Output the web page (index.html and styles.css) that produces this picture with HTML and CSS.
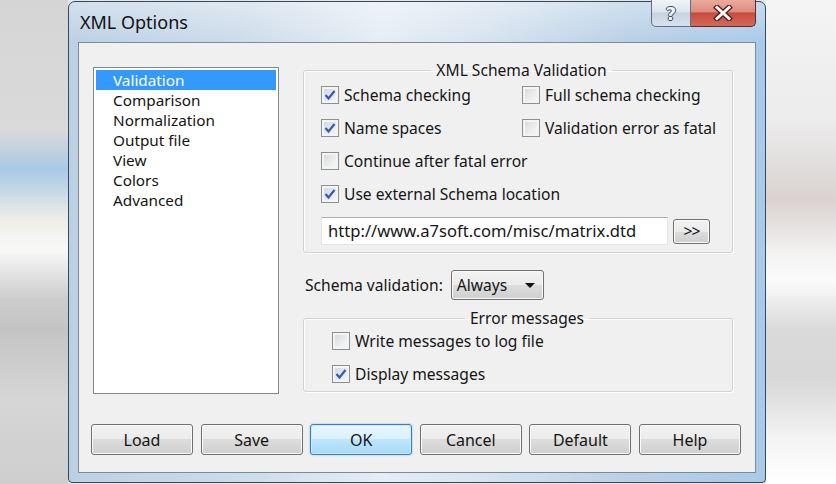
FILE: index.html
```html
<!DOCTYPE html>
<html lang="en">
<head>
    <meta charset="UTF-8">
    <title>XML Options</title>
    <link rel="stylesheet" href="styles.css">
</head>
<body>
    <div class="desktop">
        <div class="window">
            <!-- Title bar -->
            <div class="titlebar">
                <span class="title">XML Options</span>
                <div class="caption-btns">
                    <span class="cap-help">?</span>
                    <span class="cap-close">
                        <svg width="20" height="16" viewBox="0 0 20 16">
                            <path d="M4 2.5 L16 13.5 M16 2.5 L4 13.5" stroke="#4b1f1a" stroke-width="5.5" stroke-linecap="square"/>
                            <path d="M4 2.5 L16 13.5 M16 2.5 L4 13.5" stroke="#ffffff" stroke-width="3" stroke-linecap="square"/>
                        </svg>
                    </span>
                </div>
            </div>

            <div class="client">
                <div class="main">
                    <ul class="listbox">
                        <li class="selected">Validation</li>
                        <li>Comparison</li>
                        <li>Normalization</li>
                        <li>Output file</li>
                        <li>View</li>
                        <li>Colors</li>
                        <li>Advanced</li>
                    </ul>

                    <div class="options">
                        <fieldset class="group">
                            <legend>XML Schema Validation</legend>
                            <div class="check-grid">
                                <label class="check"><span class="cb checked"><svg width="12" height="12" viewBox="0 0 12 12"><path d="M1.5 6 L4.5 9.5 L10.5 2" fill="none" stroke="#3a5aa8" stroke-width="2.2"/></svg></span>Schema checking</label>
                                <label class="check"><span class="cb"></span>Full schema checking</label>
                                <label class="check"><span class="cb checked"><svg width="12" height="12" viewBox="0 0 12 12"><path d="M1.5 6 L4.5 9.5 L10.5 2" fill="none" stroke="#3a5aa8" stroke-width="2.2"/></svg></span>Name spaces</label>
                                <label class="check"><span class="cb"></span>Validation error as fatal</label>
                                <label class="check wide"><span class="cb"></span>Continue after fatal error</label>
                                <label class="check wide"><span class="cb checked"><svg width="12" height="12" viewBox="0 0 12 12"><path d="M1.5 6 L4.5 9.5 L10.5 2" fill="none" stroke="#3a5aa8" stroke-width="2.2"/></svg></span>Use external Schema location</label>
                            </div>
                            <div class="url-row">
                                <div class="textbox">http://www.a7soft.com/misc/matrix.dtd</div>
                                <button class="small-btn">&gt;&gt;</button>
                            </div>
                        </fieldset>

                        <div class="combo-row">
                            <span>Schema validation:</span>
                            <div class="combo">Always <span class="arrow"></span></div>
                        </div>

                        <fieldset class="group group-errors">
                            <legend>Error messages</legend>
                            <label class="check"><span class="cb"></span>Write messages to log file</label>
                            <label class="check"><span class="cb checked"><svg width="12" height="12" viewBox="0 0 12 12"><path d="M1.5 6 L4.5 9.5 L10.5 2" fill="none" stroke="#3a5aa8" stroke-width="2.2"/></svg></span>Display messages</label>
                        </fieldset>
                    </div>
                </div>

                <!-- Dialog buttons -->
                <div class="buttons">
                    <button class="button">Load</button>
                    <button class="button">Save</button>
                    <button class="button default">OK</button>
                    <button class="button">Cancel</button>
                    <button class="button">Default</button>
                    <button class="button">Help</button>
                </div>
            </div>
        </div>
    </div>
</body>
</html>
```

FILE: styles.css
```css
body {
    margin: 0;
    padding: 0;
    font-family: "Noto Sans", "Open Sans", sans-serif;
    font-size: 15px;
    color: #151515;
}
.desktop {
    width: 836px;
    height: 484px;
    box-sizing: border-box;
    padding-left: 68px;
    display: flex;
    align-items: flex-start;
    overflow: hidden;
    background-color: #e6e6e6;
    background-image:
        linear-gradient(to bottom, #d5d5d5 0px, #dadada 130px, #a9c9e6 170px, #eeeee6 220px, #f8f8f8 250px, #cccccc 300px, #c4c4c4 330px, #d6d6d6 400px, #cecece 484px),
        linear-gradient(to bottom, #f4f4f4 0px, #ececec 120px, #d9d2d1 200px, #f2f0f0 250px, #fbfbfb 280px, #dadada 330px, #d8d8d8 380px, #f4f4f4 440px, #ffffff 484px);
    background-size: 68px 100%, 70px 100%;
    background-position: left top, right top;
    background-repeat: no-repeat;
}

/* window frame */
.window {
    width: 698px;
    height: 482px;
    margin-top: 1px;
    box-sizing: border-box;
    border: 1px solid #34495e;
    border-radius: 7px 7px 4px 4px;
    padding: 0 9px 9px;
    display: flex;
    flex-direction: column;
    background:
        linear-gradient(to bottom, rgba(255, 255, 255, 0.35), rgba(255, 255, 255, 0) 40px),
        linear-gradient(to right, #bcd0e4 0%, #cddcea 25%, #e5edf5 45%, #d6e3ef 60%, #bad0e6 80%, #a9cae8 100%);
}
.titlebar {
    height: 40px;
    display: flex;
    justify-content: space-between;
    align-items: flex-start;
}
.title {
    font-size: 18px;
    line-height: 24px;
    padding: 8px 0 0 2px;
    color: #111;
}
.caption-btns {
    display: flex;
    margin-top: -2px;
}
.cap-help {
    width: 40px;
    height: 27px;
    box-sizing: border-box;
    border: 1px solid #5d6f82;
    border-top: none;
    border-radius: 0 0 0 5px;
    background: linear-gradient(to bottom, #f1f5f9 0%, #dde5ee 45%, #c7d3e0 50%, #d6e2ee 100%);
    display: flex;
    justify-content: center;
    align-items: center;
    font-family: "DejaVu Sans", sans-serif;
    font-weight: bold;
    font-size: 18px;
    color: #eef3f8;
    text-shadow: 1px 0 0 #3c4c5c, -1px 0 0 #3c4c5c, 0 1px 0 #3c4c5c, 0 -1px 0 #3c4c5c;
}
.cap-close {
    width: 65px;
    height: 27px;
    box-sizing: border-box;
    border: 1px solid #5a2a24;
    border-top: none;
    border-left: none;
    border-radius: 0 0 5px 0;
    background: linear-gradient(to bottom, #eaaa9e 0%, #de8c7e 45%, #c94b3d 50%, #d36a5b 100%);
    display: flex;
    justify-content: center;
    align-items: center;
}

/* client area */
.client {
    flex: 1;
    border: 1px solid #7d8a97;
    background: #f0f0f0;
    display: flex;
    flex-direction: column;
}
.main {
    display: flex;
    align-items: flex-start;
    gap: 24px;
    padding: 17px 0 0 14px;
}
.listbox {
    list-style: none;
    margin: 7px 0 0;
    padding: 2px;
    width: 186px;
    height: 327px;
    box-sizing: border-box;
    border: 1px solid #828790;
    background: #fff;
    font-size: 15.3px;
}
.listbox li {
    height: 20px;
    line-height: 20px;
    padding-left: 17px;
}
.listbox li.selected {
    background: #3399ff;
    color: #fff;
}
.options {
    width: 430px;
    display: flex;
    flex-direction: column;
    font-size: 15.6px;
}
.group {
    margin: 0;
    min-width: 0;
    border: 1px solid #d3d3d3;
    border-radius: 3px;
    padding: 2px 10px 7px 17px;
    box-shadow: inset 1px 1px 0 #fff, 1px 1px 0 #fff;
}
.group legend {
    margin: 0 auto;
    padding: 0 5px;
    line-height: 20px;
}
.check-grid {
    display: grid;
    grid-template-columns: 201px auto;
    row-gap: 7px;
}
.check {
    display: flex;
    align-items: center;
    height: 26px;
    gap: 5px;
    white-space: nowrap;
}
.check.wide {
    grid-column: 1 / -1;
}
.cb {
    width: 18px;
    height: 18px;
    box-sizing: border-box;
    border: 1px solid #8e8f8f;
    background: linear-gradient(135deg, #d4d6da 0%, #eceef0 60%, #f8f8f8 100%);
    box-shadow: inset 0 0 0 2px #f4f4f4;
    display: flex;
    justify-content: center;
    align-items: center;
    flex-shrink: 0;
}
.cb.checked {
    background: linear-gradient(135deg, #c9d4e6 0%, #e8edf5 60%, #f6f8fb 100%);
}
.url-row {
    display: flex;
    align-items: center;
    gap: 5px;
    margin-top: 10px;
}
.textbox {
    width: 347px;
    height: 28px;
    box-sizing: border-box;
    border: 1px solid #e2e6ea;
    border-top-color: #abadb3;
    background: #fff;
    padding-left: 6px;
    line-height: 26px;
    font-size: 16.6px;
    white-space: nowrap;
}
.small-btn,
.button,
.combo {
    font-family: "Noto Sans", "Open Sans", sans-serif;
    font-size: 15.6px;
    color: #151515;
    border: 1px solid #707070;
    border-radius: 3px;
    background: linear-gradient(to bottom, #f2f2f2 0%, #ebebeb 50%, #dddddd 50%, #cfcfcf 100%);
    box-shadow: inset 0 0 0 1px #fbfbfb;
}
.small-btn {
    width: 37px;
    height: 25px;
    padding: 0;
    letter-spacing: -1px;
}
.combo-row {
    display: flex;
    align-items: center;
    gap: 8px;
    margin-top: 17px;
    padding-left: 2px;
}
.combo {
    width: 93px;
    height: 30px;
    box-sizing: border-box;
    display: flex;
    align-items: center;
    justify-content: space-between;
    padding: 0 8px 0 5px;
}
.arrow {
    width: 0;
    height: 0;
    border-left: 5px solid transparent;
    border-right: 5px solid transparent;
    border-top: 5px solid #111;
}
.group-errors {
    margin-top: 8px;
    padding: 0 10px 4px 28px;
    display: flex;
    flex-direction: column;
    gap: 7px;
}
.buttons {
    display: flex;
    justify-content: space-between;
    padding: 0 14px 0 12px;
    margin-top: 30px;
}
.button {
    width: 102px;
    height: 31px;
    padding: 0;
    font-size: 16px;
}
.button.default {
    border-color: #3c7fb1;
    background: linear-gradient(to bottom, #eaf6fd 0%, #d9f0fc 50%, #bee6fd 50%, #a7d9f5 100%);
    box-shadow: inset 0 0 0 1px #c6e9fb, 0 0 2px #6fb7e2;
}
```
